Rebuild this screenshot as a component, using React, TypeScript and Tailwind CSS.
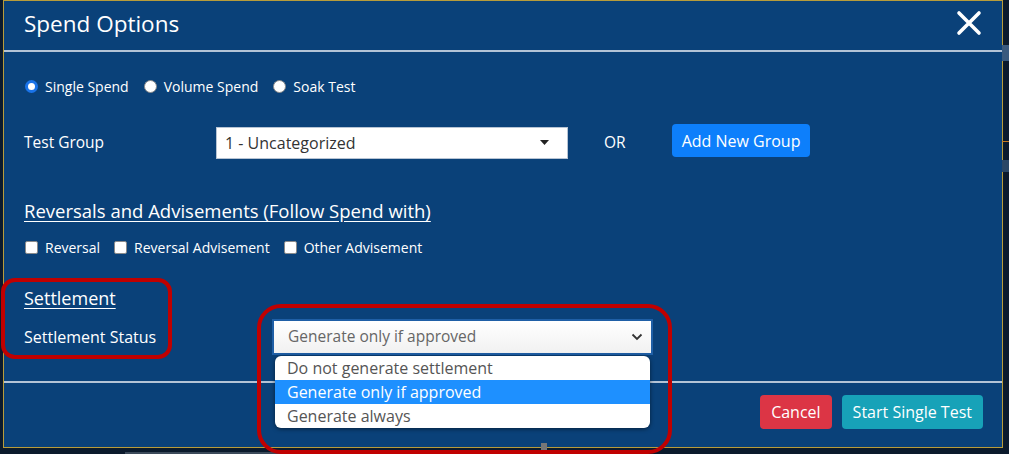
import React from "react";

const font = { fontFamily: "'Open Sans', Lato, sans-serif" };

const Radio = ({ checked, label }: { checked?: boolean; label: string }) => (
  <label className="flex items-center gap-[7px] mr-[15px]">
    <span
      className={`w-[13px] h-[13px] rounded-full bg-white ${
        checked ? "border-[3px] border-[#1a73e8]" : "border border-[#8a8a8a]"
      }`}
    />
    <span className="text-[14px] text-white">{label}</span>
  </label>
);

const Check = ({ label }: { label: string }) => (
  <label className="flex items-center gap-[7px] mr-[14px]">
    <span className="w-[13px] h-[13px] rounded-[2px] bg-white border border-[#8a8a8a]" />
    <span className="text-[14px] text-white">{label}</span>
  </label>
);

export default function App() {
  return (
    <div
      className="relative w-[1009px] h-[454px] overflow-hidden bg-[#0b1a2c]"
      style={font}>
      {/* bits of the page behind the modal */}
      <div className="absolute right-0 top-[45px] w-[7px] h-[16px] bg-[#3a5a7e]" />
      <div className="absolute right-0 top-[141px] w-[7px] h-[1px] bg-[#c77b22]" />
      <div className="absolute right-0 top-[160px] w-[7px] h-[12px] bg-[#2a4766]" />
      <div className="absolute left-[541px] top-[443px] w-[6px] h-[11px] bg-[#777]" />
      <div className="absolute left-[125px] top-[452px] w-[500px] h-[2px] bg-[#3c4a5a]" />

      <div className="ml-[3px] w-[1000px] h-[448px] border border-[#b89c3a] bg-[#0a4179] flex flex-col">
        {/* header */}
        <div className="h-[51px] flex items-center justify-between pl-[20px] pr-[20px] border-b-2 border-[#b3c3d6]">
          <h1 className="text-[22.5px] text-white leading-none pb-[2px]">Spend Options</h1>
          <button aria-label="Close" className="mt-[-6px]">
            <svg width="26" height="26" viewBox="0 0 26 26">
              <path d="M3 3 L23 23 M23 3 L3 23" stroke="white" strokeWidth="3.6" strokeLinecap="round" />
            </svg>
          </button>
        </div>

        {/* body */}
        <div className="h-[329px] px-[20px] flex flex-col">
          <div className="mt-[24px] h-[20px] flex items-center pl-[1px]">
            <Radio checked label="Single Spend" />
            <Radio label="Volume Spend" />
            <Radio label="Soak Test" />
          </div>

          <div className="mt-[30px] h-[33px] flex items-center">
            <span className="w-[192px] text-[15.5px] text-white">Test Group</span>
            <div className="w-[352px] h-[32px] bg-white border border-[#b7c4d4] flex items-center justify-between pl-[8px] pr-[18px]">
              <span className="text-[16px] text-[#333]">1 - Uncategorized</span>
              <svg width="9" height="5" viewBox="0 0 9 5">
                <path d="M0 0 L9 0 L4.5 5 Z" fill="#222" />
              </svg>
            </div>
            <span className="ml-[36px] text-[15.5px] text-white">OR</span>
            <button className="ml-[46px] h-[33px] px-[10px] rounded-[4px] bg-[#0d7ffb] text-[16px] text-white mt-[-4px]">
              Add New Group
            </button>
          </div>

          <div className="mt-[40px] h-[24px] flex items-center">
            <span className="text-[18.5px] text-white underline underline-offset-[3px]">
              Reversals and Advisements (Follow Spend with)
            </span>
          </div>

          <div className="mt-[14px] h-[20px] flex items-center pl-[1px]">
            <Check label="Reversal" />
            <Check label="Reversal Advisement" />
            <Check label="Other Advisement" />
          </div>

          <div className="mt-[29px] h-[24px] flex items-center">
            <span className="text-[18px] text-white underline underline-offset-[3px]">Settlement</span>
          </div>

          <div className="mt-[11px] h-[32px] flex items-center">
            <span className="w-[250px] text-[16px] text-white">Settlement Status</span>
            <div className="relative w-[377px] h-[32px] bg-gradient-to-b from-white to-[#f1f1f1] ring-2 ring-[#1f5fa6] flex items-center justify-between pl-[14px] pr-[8px]">
              <span className="text-[15.5px] text-[#666]">Generate only if approved</span>
              <svg width="12" height="8" viewBox="0 0 12 8">
                <path d="M1.5 1.5 L6 6 L10.5 1.5" stroke="#333" strokeWidth="1.8" fill="none" />
              </svg>
              <ul className="absolute left-[1px] top-[35px] w-[375px] bg-white rounded-[6px] shadow-[0_1px_4px_rgba(0,0,0,0.5)] overflow-hidden z-10">
                <li className="h-[24px] pl-[12px] flex items-center text-[16px] text-[#555]">
                  Do not generate settlement
                </li>
                <li className="h-[24px] pl-[12px] flex items-center text-[16px] text-white bg-[#1e90ff]">
                  Generate only if approved
                </li>
                <li className="h-[24px] pl-[12px] flex items-center text-[16px] text-[#555]">
                  Generate always
                </li>
              </ul>
            </div>
          </div>
        </div>

        {/* footer */}
        <div className="flex-1 border-t-2 border-[#b3c3d6] flex items-start justify-end gap-[10px] pt-[12px] pr-[19px]">
          <button className="h-[34px] px-[11px] rounded-[4px] bg-[#dc3545] text-[16px] text-white">Cancel</button>
          <button className="h-[34px] px-[11px] rounded-[4px] bg-[#17a2b8] text-[16px] text-white">
            Start Single Test
          </button>
        </div>
      </div>

      {/* annotation boxes */}
      <div className="absolute left-[1px] top-[278px] w-[171px] h-[81px] border-[4px] border-[#c00000] rounded-[14px] pointer-events-none" />
      <div className="absolute left-[257px] top-[304px] w-[415px] h-[150px] border-[4px] border-[#c00000] rounded-[24px] pointer-events-none z-20" />
    </div>
  );
}
